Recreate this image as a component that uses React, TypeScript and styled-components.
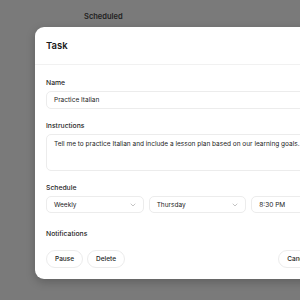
import styled, { createGlobalStyle } from "styled-components"

const GlobalStyle = createGlobalStyle`
html, body {
  margin: 0;
  padding: 0;
  background: #7a7a7a;
  overflow: hidden;
  font-family: Inter, "Liberation Sans", sans-serif;
}
`;

const App = () => {
    return (
        <>
        <GlobalStyle />
        <Page>
        <PageTitle>Scheduled</PageTitle>
        <Modal>
        <Header>Task</Header>
        <Body>
        <Field>
        <Label>Name</Label>
        <Input>Practice Italian</Input>
        </Field>

        <Field>
        <Label>Instructions</Label>
        <TextArea>Tell me to practice Italian and include a lesson plan based on our learning goals.</TextArea>
        </Field>

        <Field>
        <Label>Schedule</Label>
        <SelectRow>
        <Select>Weekly<Chevron /></Select>
        <Select>Thursday<Chevron /></Select>
        <Select>8:30 PM</Select>
        </SelectRow>
        </Field>

        <Notifications>Notifications</Notifications>

        <Footer>
        <Group>
        <PillButton>Pause</PillButton>
        <PillButton>Delete</PillButton>
        </Group>
        <Group>
        <PillButton>Cancel</PillButton>
        <PillButton $primary>Save</PillButton>
        </Group>
        </Footer>
        </Body>
        </Modal>
        </Page>
        </>
    )
}

export default App

const Chevron = () => (
    <svg width="6" height="4" viewBox="0 0 6 4" fill="none">
        <path d="M1 1l2 2 2-2" stroke="#b5b5b5" strokeWidth="0.8" strokeLinecap="round" strokeLinejoin="round" />
    </svg>
)

const Page = styled.div`
width: 300px;
height: 300px;
padding-top: 11px;
box-sizing: border-box;
`;
const PageTitle = styled.div`
margin-left: 84px;
height: 11px;
line-height: 11px;
font-size: 7.5px;
font-weight: 600;
color: #1f1f1f;
`;
const Modal = styled.div`
margin-top: 5px;
margin-left: 35px;
width: 325px;
height: 252px;
background: #fff;
border-radius: 9px;
box-shadow: 0 3px 10px rgba(0,0,0,0.22);
display: flex;
flex-direction: column;
`;
const Header = styled.div`
height: 38px;
flex-shrink: 0;
padding: 0 11px;
display: flex;
align-items: center;
border-bottom: 1px solid #f1f1f1;
font-size: 9.5px;
font-weight: 600;
color: #1a1a1a;
box-sizing: border-box;
`;
const Body = styled.div`
padding: 13px 11px 12px;
display: flex;
flex-direction: column;
gap: 12px;
`;
const Field = styled.div`
display: flex;
flex-direction: column;
gap: 4px;
`;
const Label = styled.div`
height: 9px;
line-height: 9px;
font-size: 6.8px;
font-weight: 500;
color: #1f1f1f;
`;
const Notifications = styled(Label)`
margin-top: 4px;
`;
const Input = styled.div`
height: 18px;
box-sizing: border-box;
border: 1px solid #ececec;
border-radius: 5px;
padding: 0 7px;
display: flex;
align-items: center;
font-size: 6.5px;
color: #222;
`;
const TextArea = styled.div`
height: 37px;
box-sizing: border-box;
border: 1px solid #ececec;
border-radius: 5px;
padding: 5px 7px;
line-height: 9px;
font-size: 6.5px;
color: #222;
white-space: nowrap;
`;
const SelectRow = styled.div`
display: grid;
grid-template-columns: repeat(3, 1fr);
gap: 5px;
`;
const Select = styled.div`
height: 17px;
box-sizing: border-box;
border: 1px solid #ececec;
border-radius: 5px;
padding: 0 7px;
display: flex;
align-items: center;
justify-content: space-between;
font-size: 6.5px;
color: #222;
`;
const Footer = styled.div`
display: flex;
justify-content: space-between;
align-items: center;
`;
const Group = styled.div`
display: flex;
gap: 4px;
`;
const PillButton = styled.div<{ $primary?: boolean }>`
height: 18px;
box-sizing: border-box;
padding: 0 ${p => p.$primary ? "5px" : "8px"};
border-radius: 9px;
border: 1px solid ${p => p.$primary ? "#1a1a1a" : "#ececec"};
background: ${p => p.$primary ? "#1a1a1a" : "#fff"};
color: ${p => p.$primary ? "#fff" : "#222"};
display: flex;
align-items: center;
font-size: 6.5px;
font-weight: 500;
`;
